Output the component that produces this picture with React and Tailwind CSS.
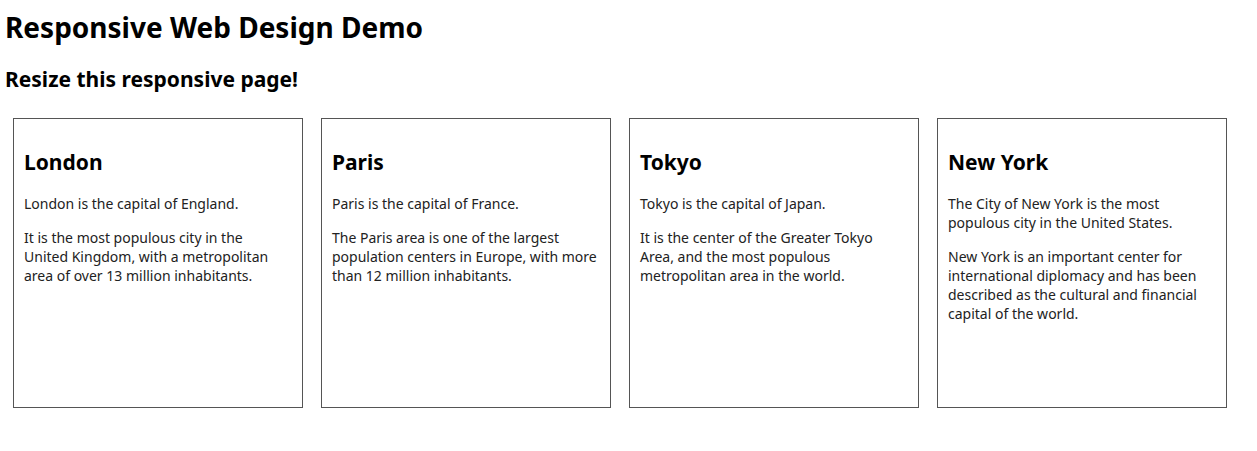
import React from 'react';

const cities = [
  {
    name: 'London',
    paras: [
      'London is the capital of England.',
      'It is the most populous city in the United Kingdom, with a metropolitan area of over 13 million inhabitants.',
    ],
  },
  {
    name: 'Paris',
    paras: [
      'Paris is the capital of France.',
      'The Paris area is one of the largest population centers in Europe, with more than 12 million inhabitants.',
    ],
  },
  {
    name: 'Tokyo',
    paras: [
      'Tokyo is the capital of Japan.',
      'It is the center of the Greater Tokyo Area, and the most populous metropolitan area in the world.',
    ],
  },
  {
    name: 'New York',
    paras: [
      'The City of New York is the most populous city in the United States.',
      'New York is an important center for international diplomacy and has been described as the cultural and financial capital of the world.',
    ],
  },
];

const CityCard = ({ city }) => (
  <div className="w-[290px] h-[290px] shrink-0 border border-[#555] pl-[10px] pr-[12px]">
    <h2 className="mt-[29px] mb-[18px] text-[21px] leading-[28px] font-bold text-black">{city.name}</h2>
    {city.paras.map((p, i) => (
      <p key={i} className="mb-[15px] text-[14px] leading-[19px] text-[#222]">
        {p}
      </p>
    ))}
  </div>
);

export default function App() {
  return (
    <div className="w-[1257px] h-[451px] bg-white font-['Noto_Sans',sans-serif] text-black">
      <div className="px-[5px] pt-[8px]">
        <h1 className="text-[28px] leading-[38px] font-bold">Responsive Web Design Demo</h1>
        <h2 className="mt-[18px] text-[21px] leading-[30px] font-bold">Resize this responsive page!</h2>
      </div>
      <div className="flex gap-[18px] pl-[13px] mt-[24px]">
        {cities.map((c) => (
          <CityCard key={c.name} city={c} />
        ))}
      </div>
    </div>
  );
}
